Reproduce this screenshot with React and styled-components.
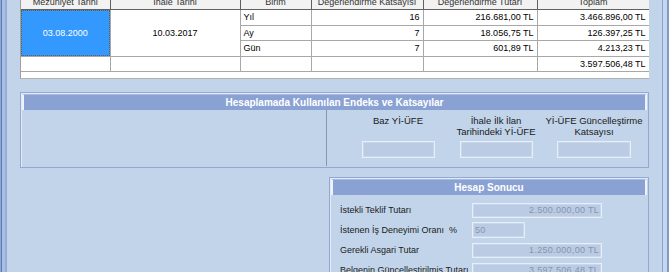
import styled, { createGlobalStyle } from "styled-components";

const GlobalStyle = createGlobalStyle`
  html, body {
    margin: 0;
    padding: 0;
    background: #c2d4ea;
    overflow: hidden;
  }
  body {
    font-family: "Liberation Sans", Arial, sans-serif;
  }
`;

const Window = styled.div`
  display: flex;
  width: 669px;
  height: 272px;
  overflow: hidden;
  background: #c2d4ea;
`;

const LeftFrame = styled.div`
  width: 7px;
  flex-shrink: 0;
  background: linear-gradient(
    to right,
    #8ea8d3 0px,
    #8ea8d3 1px,
    #5a79b2 1px,
    #5a79b2 2px,
    #aac0e2 2px,
    #aac0e2 5px,
    #94aed8 5px,
    #94aed8 7px
  );
`;

const RightFrame = styled.div`
  width: 7px;
  flex-shrink: 0;
  background: linear-gradient(
    to right,
    #8ba4cf 0px,
    #8ba4cf 1px,
    #c6d6ec 1px,
    #c6d6ec 5px,
    #7f99c8 5px,
    #7f99c8 7px
  );
`;

const Content = styled.div`
  flex: 1;
  display: flex;
  flex-direction: column;
  padding: 0 13px;
  min-width: 0;
  overflow: hidden;
`;

const GridWrap = styled.div`
  flex-shrink: 0;
  height: 79px;
  overflow: hidden;
  background: #fff;
  border-left: 1px solid #a0a0a0;
  border-bottom: 1px solid #b0b0b0;
  box-sizing: border-box;
  width: 629px;
`;

const Grid = styled.table`
  border-collapse: collapse;
  table-layout: fixed;
  width: 628px;
  margin-top: -6px;
  font-size: 9px;
  color: #000;
`;

const Th = styled.th`
  height: 15px;
  padding: 0;
  font-weight: normal;
  color: #333;
  background: #f2f2f2;
  border-right: 1px solid #606060;
  border-bottom: 1px solid #606060;
  text-align: center;
  vertical-align: middle;
`;

const Td = styled.td`
  height: 14.6px;
  padding: 0 3px;
  border-right: 1px solid #a8a8a8;
  border-bottom: 1px solid #a8a8a8;
  text-align: ${(p) => p.$align || "left"};
  white-space: nowrap;
  overflow: hidden;
  background: ${(p) => (p.$selected ? "#3399ff" : "#fff")};
  color: ${(p) => (p.$selected ? "#fff" : "#000")};
  outline: ${(p) => (p.$selected ? "1px dotted #6b5a3c" : "none")};
  outline-offset: -1px;
`;

const Panel = styled.div`
  flex-shrink: 0;
  border: 1px solid #93a9d3;
  box-shadow: inset 1px 1px 0 #e3eaf5;
  box-sizing: border-box;
  display: flex;
  flex-direction: column;
`;

const IndexPanel = styled(Panel)`
  margin-top: 13px;
  height: 76px;
  width: 629px;
`;

const ResultPanel = styled(Panel)`
  margin-top: 9px;
  width: 320px;
  height: 120px;
  align-self: flex-end;
`;

const PanelHeader = styled.div`
  flex-shrink: 0;
  margin: 1px 1px 0 1px;
  height: 15px;
  background: #8aa2d3;
  border-left: 2px solid #eef2fa;
  border-right: 2px solid #eef2fa;
  border-top: 1px solid #a7bae0;
  color: #fff;
  font-weight: bold;
  font-size: 10px;
  display: flex;
  align-items: center;
  justify-content: center;
`;

const IndexBody = styled.div`
  flex: 1;
  display: flex;
`;

const EmptyArea = styled.div`
  width: 305px;
  border-right: 1px solid #8795ad;
  margin-bottom: 1px;
`;

const IndexColumns = styled.div`
  display: grid;
  grid-template-columns: repeat(3, 98px);
  padding-left: 22px;
  padding-top: 5px;
`;

const IndexCol = styled.div`
  display: flex;
  flex-direction: column;
  align-items: center;
`;

const IndexLabel = styled.div`
  height: 26px;
  font-size: 9.5px;
  line-height: 11px;
  text-align: center;
  color: #1a1a1a;
`;

const Field = styled.div`
  box-sizing: border-box;
  width: ${(p) => p.$w}px;
  height: ${(p) => p.$h || 15}px;
  background: #bacbe3;
  border: 1px solid #e8eef7;
  box-shadow: inset 0 0 0 1px #c9d7ea;
  color: #8696ae;
  font-size: 9px;
  display: flex;
  align-items: center;
  justify-content: ${(p) => (p.$left ? "flex-start" : "flex-end")};
  padding: 0 2px;
  letter-spacing: 0.3px;
`;

const ResultBody = styled.div`
  padding: 7px 0 0 10px;
  display: flex;
  flex-direction: column;
  gap: 4px;
`;

const ResultRow = styled.div`
  display: flex;
  align-items: center;
  height: 16px;
  flex-shrink: 0;
`;

const ResultLabel = styled.div`
  width: 132px;
  font-size: 9px;
  color: #1a1a1a;
  white-space: pre;
`;

const rows = [
  { unit: "Yıl", coef: "16", amount: "216.681,00 TL", total: "3.466.896,00 TL" },
  { unit: "Ay", coef: "7", amount: "18.056,75 TL", total: "126.397,25 TL" },
  { unit: "Gün", coef: "7", amount: "601,89 TL", total: "4.213,23 TL" },
];

const results = [
  { label: "İstekli Teklif Tutarı", value: "2.500.000,00 TL", w: 130 },
  { label: "İstenen İş Deneyimi Oranı  %", value: "50", w: 53, left: true, h: 16 },
  { label: "Gerekli Asgari Tutar", value: "1.250.000,00 TL", w: 130 },
  { label: "Belgenin Güncelleştirilmiş Tutarı", value: "3.597.506,48 TL", w: 130 },
];

export default function App() {
  return (
    <>
      <GlobalStyle />
      <Window>
        <LeftFrame />
        <Content>
          <GridWrap>
            <Grid>
              <colgroup>
                <col style={{ width: 89 }} />
                <col style={{ width: 130 }} />
                <col style={{ width: 71 }} />
                <col style={{ width: 112 }} />
                <col style={{ width: 114 }} />
                <col style={{ width: 112 }} />
              </colgroup>
              <thead>
                <tr>
                  <Th>Mezuniyet Tarihi</Th>
                  <Th>İhale Tarihi</Th>
                  <Th>Birim</Th>
                  <Th>Değerlendirme Katsayısı</Th>
                  <Th>Değerlendirme Tutarı</Th>
                  <Th>Toplam</Th>
                </tr>
              </thead>
              <tbody>
                {rows.map((r, i) => (
                  <tr key={r.unit}>
                    {i === 0 && (
                      <>
                        <Td rowSpan={3} $align="center" $selected>
                          03.08.2000
                        </Td>
                        <Td rowSpan={3} $align="center">
                          10.03.2017
                        </Td>
                      </>
                    )}
                    <Td>{r.unit}</Td>
                    <Td $align="right">{r.coef}</Td>
                    <Td $align="right">{r.amount}</Td>
                    <Td $align="right">{r.total}</Td>
                  </tr>
                ))}
                <tr>
                  <Td />
                  <Td />
                  <Td />
                  <Td />
                  <Td />
                  <Td $align="right">3.597.506,48 TL</Td>
                </tr>
              </tbody>
            </Grid>
          </GridWrap>

          <IndexPanel>
            <PanelHeader>Hesaplamada Kullanılan Endeks ve Katsayılar</PanelHeader>
            <IndexBody>
              <EmptyArea />
              <IndexColumns>
                <IndexCol>
                  <IndexLabel>Baz Yİ-ÜFE</IndexLabel>
                  <Field $w={73} $h={17} />
                </IndexCol>
                <IndexCol>
                  <IndexLabel>
                    İhale İlk İlan
                    <br />
                    Tarihindeki Yİ-ÜFE
                  </IndexLabel>
                  <Field $w={73} $h={17} />
                </IndexCol>
                <IndexCol>
                  <IndexLabel>
                    Yİ-ÜFE Güncelleştirme
                    <br />
                    Katsayısı
                  </IndexLabel>
                  <Field $w={74} $h={17} />
                </IndexCol>
              </IndexColumns>
            </IndexBody>
          </IndexPanel>

          <ResultPanel>
            <PanelHeader>Hesap Sonucu</PanelHeader>
            <ResultBody>
              {results.map((r) => (
                <ResultRow key={r.label}>
                  <ResultLabel>{r.label}</ResultLabel>
                  <Field $w={r.w} $h={r.h} $left={r.left}>
                    {r.value}
                  </Field>
                </ResultRow>
              ))}
            </ResultBody>
          </ResultPanel>
        </Content>
        <RightFrame />
      </Window>
    </>
  );
}
